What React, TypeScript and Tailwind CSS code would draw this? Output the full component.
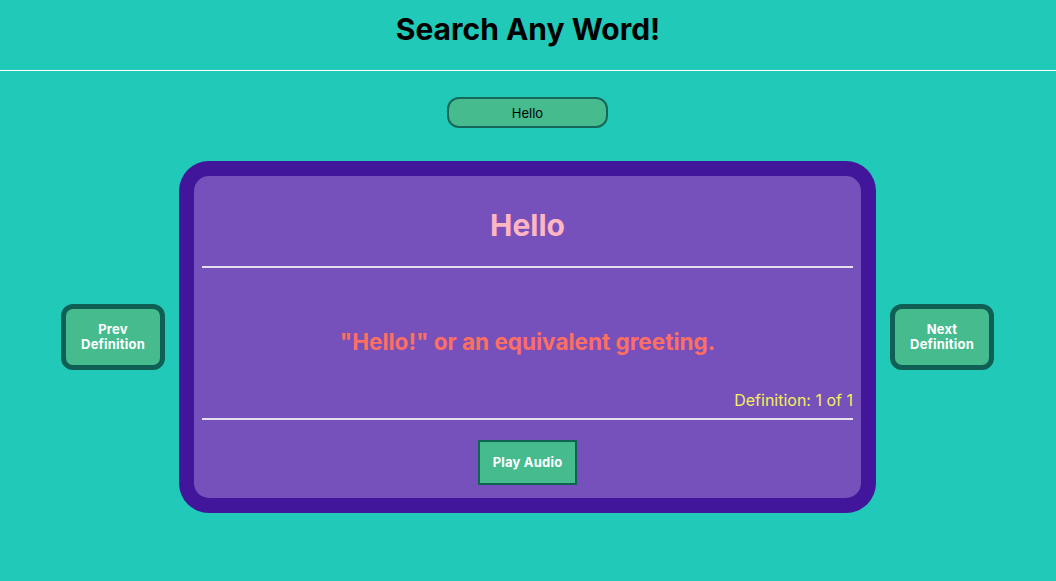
export default function App() {
  return (
    <div className="min-h-screen bg-[#20c9b8] font-['Inter',sans-serif]">
      {/* Header */}
      <header className="h-[71px] border-b border-white flex items-center justify-center">
        <h1 className="text-[30px] font-bold text-black -mt-[12px]">Search Any Word!</h1>
      </header>

      {/* Search input */}
      <div className="flex justify-center mt-[26px] pr-px">
        <input
          type="text"
          defaultValue="Hello"
          className="w-[161px] h-[31px] rounded-[12px] border-2 border-[#17665a] bg-[#45bb8e] text-center text-[13px] text-black outline-none"
        />
      </div>

      {/* Card row */}
      <div className="flex items-center justify-center gap-[14px] mt-[33px] pr-px">
        <button className="w-[104px] h-[66px] rounded-[12px] border-[5px] border-[#0f5f55] bg-[#45bb8e] text-white font-bold text-[13px] leading-[15px] tracking-[0.2px]">
          Prev
          <br />
          Definition
        </button>

        <div className="w-[697px] h-[352px] rounded-[30px] bg-[#41169a] p-[15px]">
          <div className="h-full rounded-[15px] bg-[#7651bb] px-[8px] flex flex-col">
            <div className="h-[92px] pt-[8px] flex items-center justify-center border-b-2 border-[#e6e0ee]">
              <h2 className="text-[30px] font-bold text-[#ffb6c1]">Hello</h2>
            </div>
            <div className="h-[152px] border-b-2 border-[#e6e0ee] flex flex-col">
              <p className="mt-[57px] text-center text-[22.5px] leading-[33px] font-bold text-[#ff6f61]">
                "Hello!" or an equivalent greeting.
              </p>
              <p className="mt-[30px] text-right text-[16px] leading-[24px] text-[#f4f05a]">Definition: 1 of 1</p>
            </div>
            <div className="flex justify-center mt-[20px]">
              <button className="w-[99px] h-[45px] border-2 border-[#0e6650] bg-[#45bb8e] text-white font-bold text-[13px] tracking-[0.2px]">
                Play Audio
              </button>
            </div>
          </div>
        </div>

        <button className="w-[104px] h-[66px] rounded-[12px] border-[5px] border-[#0f5f55] bg-[#45bb8e] text-white font-bold text-[13px] leading-[15px] tracking-[0.2px]">
          Next
          <br />
          Definition
        </button>
      </div>
    </div>
  );
}
